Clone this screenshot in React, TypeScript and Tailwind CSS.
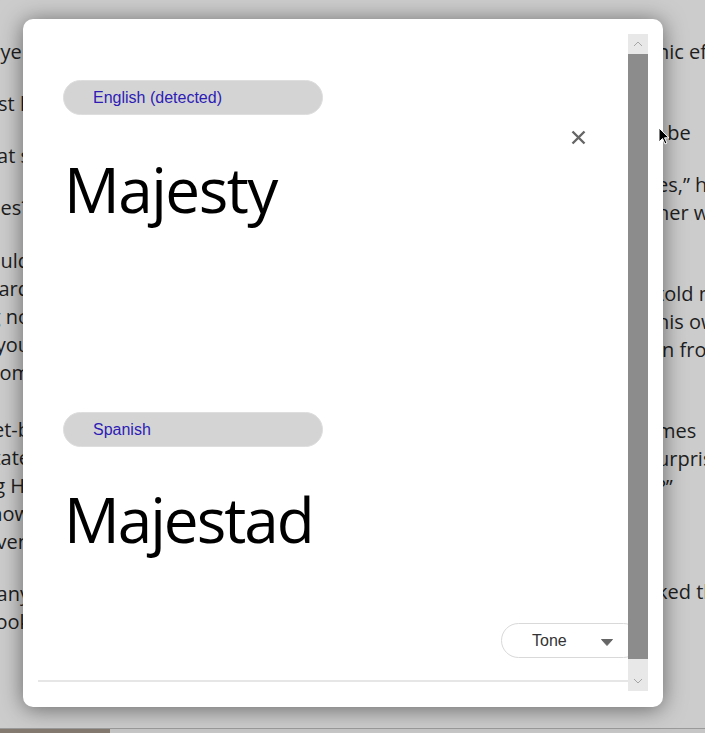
import { useState } from 'react';

const leftLines: { gap: number; text: string }[] = [
    { gap: 38, text: 'lawyer' },
    { gap: 24, text: 'est li' },
    { gap: 24, text: 'that s' },
    { gap: 24, text: 'uses?' },
    { gap: 25, text: 'ould' },
    { gap: 0, text: 'lyard' },
    { gap: 0, text: 'ng no' },
    { gap: 0, text: 'o you' },
    { gap: 0, text: 'whom' },
    { gap: 29, text: 'ket-b' },
    { gap: 0, text: 'state' },
    { gap: 0, text: 'ng Hi' },
    { gap: 0, text: 'know' },
    { gap: 0, text: 'even' },
    { gap: 24, text: 'many' },
    { gap: 0, text: 'book' },
];

const rightLines: { gap: number; text: string }[] = [
    { gap: 38, text: 'nic efforts' },
    { gap: 53, text: 'l be' },
    { gap: 24, text: 'es,” he' },
    { gap: 0, text: 'her was' },
    { gap: 53, text: 'told me' },
    { gap: 0, text: 'his own' },
    { gap: 0, text: 'in front' },
    { gap: 53, text: 'mes' },
    { gap: 0, text: 'urprised' },
    { gap: 0, text: '?”' },
    { gap: 77, text: 'ked the' },
];

function TranslatePanel() {
    const [tone] = useState('Tone');

    return (
        <div className="absolute left-[23px] top-[19px] w-[640px] h-[688px] bg-white rounded-[10px] shadow-[0_2px_22px_rgba(0,0,0,0.5)] pt-[15px] pl-[15px] pr-[15px] pb-[16px] flex">
            {/* close */}
            <button className="absolute left-[548px] top-[111px] w-[15px] h-[15px]">
                <svg viewBox="0 0 15 15" width="15" height="15">
                    <path d="M1.5 1.5 L13.5 13.5 M13.5 1.5 L1.5 13.5" stroke="#666" strokeWidth="2.4" fill="none" />
                </svg>
            </button>

            <div className="w-[590px] h-[657px] flex flex-col overflow-hidden">
                <div className="pl-[25px] pt-[46px] flex flex-col">
                    <div className="w-[260px] h-[35px] rounded-full bg-[#d4d4d4] border border-[#dedede] flex items-center pl-[29px] pt-[1px] text-[16px] text-[#2d1cb5] font-['Liberation_Sans',Arial,sans-serif]">
                        English (detected)
                    </div>
                    <div className="mt-[43px] h-[62px] leading-[62px] text-[62px] text-black font-['Open_Sans',sans-serif] tracking-[-1.5px] pl-[1px]">
                        Majesty
                    </div>
                    <div className="mt-[192px] w-[260px] h-[35px] rounded-full bg-[#d4d4d4] border border-[#dedede] flex items-center pl-[29px] pt-[1px] text-[16px] text-[#2d1cb5] font-['Liberation_Sans',Arial,sans-serif]">
                        Spanish
                    </div>
                    <div className="mt-[41px] h-[62px] leading-[62px] text-[62px] text-black font-['Open_Sans',sans-serif] tracking-[-2px] pl-[1px]">
                        Majestad
                    </div>
                </div>

                <div className="flex-1" />

                <div className="flex justify-end mr-[-13px] mb-[22px]">
                    <button className="w-[140px] h-[35px] rounded-full border border-[#d9d9d9] bg-white flex items-center pl-[30px] text-[16px] text-[#333] font-['Liberation_Sans',Arial,sans-serif]">
                        <span>{tone}</span>
                        <svg className="ml-[34px] mt-[3px]" viewBox="0 0 12 7" width="12" height="7">
                            <path d="M0.5 0.5 L11.5 0.5 L6 6.5 Z" fill="#666" stroke="#666" strokeWidth="1" strokeLinejoin="round" />
                        </svg>
                    </button>
                </div>
                <div className="h-[2px] bg-[#e6e6e6]" />
                <div className="h-[9px]" />
            </div>

            {/* scrollbar */}
            <div className="w-[20px] h-[657px] flex flex-col bg-[#e8e8e8]">
                <div className="h-[20px] flex items-center justify-center">
                    <svg viewBox="0 0 10 6" width="10" height="6">
                        <path d="M1 5 L5 1 L9 5" stroke="#a6a6a6" strokeWidth="1" fill="none" />
                    </svg>
                </div>
                <div className="h-[605px] bg-[#8c8c8c]" />
                <div className="flex-1 flex items-end justify-center pb-[7px]">
                    <svg viewBox="0 0 10 6" width="10" height="6">
                        <path d="M1 1 L5 5 L9 1" stroke="#a6a6a6" strokeWidth="1" fill="none" />
                    </svg>
                </div>
            </div>
        </div>
    );
}

export default function App() {
    return (
        <div className="relative w-[705px] h-[733px] bg-[#cccccc] overflow-hidden font-['Open_Sans',sans-serif] text-[20px] text-[#1e1e1e]">
            <div className="flex h-[728px]">
                <div className="w-[30px] shrink-0 flex flex-col">
                    {leftLines.map((l, i) => (
                        <div key={i} className="h-[28px] leading-[28px] flex justify-end whitespace-nowrap" style={{ marginTop: l.gap }}>
                            <span>{l.text}</span>
                        </div>
                    ))}
                </div>
                <div className="flex-1" />
                <div className="w-[48px] shrink-0 flex flex-col">
                    {rightLines.map((l, i) => (
                        <div key={i} className="h-[28px] leading-[28px] whitespace-nowrap" style={{ marginTop: l.gap }}>
                            {l.text}
                        </div>
                    ))}
                </div>
            </div>
            <div className="flex h-[5px] border-t border-[#9a9a9a]">
                <div className="w-[110px] bg-[#857a70]" />
                <div className="flex-1 bg-[#c6c6c6]" />
            </div>

            <TranslatePanel />

            {/* mouse pointer */}
            <svg className="absolute left-[658px] top-[127px]" viewBox="0 0 12 19" width="12" height="19">
                <path d="M1 1 L1 15 L4.5 11.5 L7 17 L9 16 L6.5 10.8 L11 10.8 Z" fill="#000" stroke="#fff" strokeWidth="1" />
            </svg>
        </div>
    );
}
